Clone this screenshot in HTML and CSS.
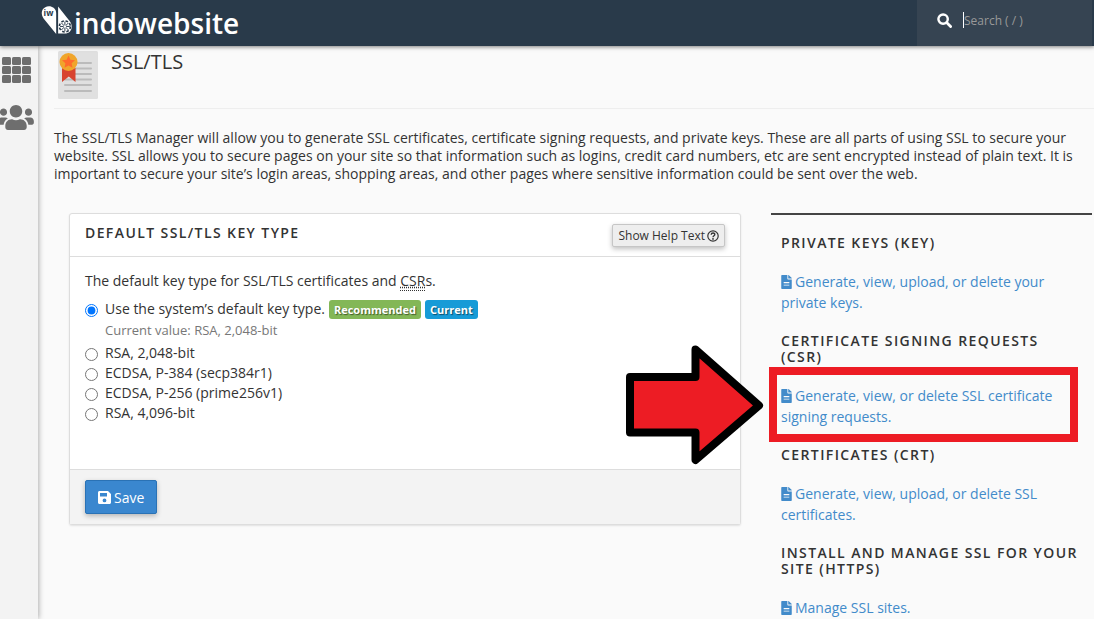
FILE: index.html
```html
<!DOCTYPE html>
<html lang="en">
<head>
    <meta charset="utf-8">
    <title>SSL/TLS</title>
    <link rel="stylesheet" href="styles.css">
</head>
<body>
    <!-- shared symbols -->
    <svg class="symbols" aria-hidden="true">
        <symbol id="icon-file" viewBox="0 0 384 512">
            <path d="M224 136V0H24C11 0 0 11 0 24v464c0 13 11 24 24 24h336c13 0 24-11 24-24V160H248c-13 0-24-11-24-24zm72 240c0 7-5 12-12 12H100c-7 0-12-5-12-12v-24h208v24zm0-88c0 7-5 12-12 12H100c-7 0-12-5-12-12v-36h196c7 0 12 5 12 12v24zM384 122v6H256V0h6c6 0 12 3 17 7l98 98c4 4 7 10 7 17z"/>
        </symbol>
    </svg>

    <header class="topbar">
        <a class="brand" href="#" aria-label="indowebsite">
            <svg class="brand-mark" viewBox="0 0 96 90" aria-hidden="true">
                <path fill="#fff" d="M47 88 8 40C-1 28 1 12 12 6c10-6 20-4 27 1 6 5 8 10 8 17z"/>
                <path fill="#fff" d="M53 3v84h20c14 0 22-9 22-22 0-8-3-13-7-18z"/>
                <text x="8" y="34" class="brand-iw">iw</text>
                <g stroke="#293a4a" fill="none">
                    <circle cx="74" cy="65" r="17" stroke-width="5" stroke-dasharray="8 5.350"/>
                    <path stroke-width="3" d="M74 50v30M59 65h30M63 54l22 22M85 54 63 76"/>
                </g>
                <circle cx="74" cy="65" r="4" fill="#fff"/>
            </svg>
            <span class="brand-name">indowebsite</span>
        </a>
        <div class="search">
            <label for="search" aria-label="Search">
                <svg viewBox="0 0 16 16" class="search-icon" aria-hidden="true">
                    <circle cx="6.5" cy="6.5" r="5" fill="none" stroke="#fff" stroke-width="2.6"/>
                    <path d="m10.5 10.5 4 4" stroke="#fff" stroke-width="3" stroke-linecap="round"/>
                </svg>
            </label>
            <input type="text" id="search" placeholder="Search ( / )">
        </div>
    </header>

    <div class="layout">
        <nav class="sidebar">
            <a href="#" aria-label="Home">
                <svg class="icon-grid" viewBox="0 0 29 26" fill="#6e6e6e" aria-hidden="true">
                    <rect x="0" y="0" width="9" height="8" rx="1.5"/>
                    <rect x="10" y="0" width="9" height="8" rx="1.5"/>
                    <rect x="20" y="0" width="9" height="8" rx="1.5"/>
                    <rect x="0" y="9" width="9" height="8" rx="1.5"/>
                    <rect x="10" y="9" width="9" height="8" rx="1.5"/>
                    <rect x="20" y="9" width="9" height="8" rx="1.5"/>
                    <rect x="0" y="18" width="9" height="8" rx="1.5"/>
                    <rect x="10" y="18" width="9" height="8" rx="1.5"/>
                    <rect x="20" y="18" width="9" height="8" rx="1.5"/>
                </svg>
            </a>
            <a href="#" aria-label="User Manager">
                <svg class="icon-users" viewBox="0 32 640 448" fill="#6e6e6e" aria-hidden="true">
                    <path d="M96 224c35.300 0 64-28.700 64-64s-28.700-64-64-64-64 28.700-64 64 28.700 64 64 64zm448 0c35.300 0 64-28.700 64-64s-28.700-64-64-64-64 28.700-64 64 28.700 64 64 64zm32 32h-64c-17.600 0-33.500 7.100-45.100 18.600 40.300 22.100 68.900 62 75.100 109.400h66c17.700 0 32-14.300 32-32v-32c0-35.300-28.700-64-64-64zm-256 0c61.900 0 112-50.100 112-112S381.900 32 320 32 208 82.100 208 144s50.100 112 112 112zm76.800 32h-8.300c-20.800 10-43.900 16-68.500 16s-47.600-6-68.500-16h-8.300C179.600 288 128 339.600 128 403.200V432c0 26.500 21.500 48 48 48h288c26.500 0 48-21.500 48-48v-28.800c0-63.600-51.600-115.200-115.200-115.200zm-223.700-13.400C161.500 263.100 145.600 256 128 256H64c-35.300 0-64 28.700-64 64v32c0 17.700 14.300 32 32 32h65.900c6.300-47.400 34.900-87.300 75.200-109.400z"/>
                </svg>
            </a>
        </nav>

        <main class="content">
            <div class="page-header">
                <svg class="page-icon" viewBox="0 0 40 48" aria-hidden="true">
                    <rect width="40" height="48" rx="1.500" fill="#e0e0e0"/>
                    <path d="M7 12h26M7 17.500h26M7 23h26M7 28.500h26M7 34h26M7 40h26" stroke="#bbb" stroke-width="2" stroke-linecap="round"/>
                    <path fill="#d8432f" d="M4 17h13.500v14l-6.700-5.500L4 31z"/>
                    <circle cx="10.500" cy="11" r="9" fill="#f0a52b"/>
                    <path fill="#ff6b2c" d="m10.500 4.500 1.900 4.200 4.600.5-3.400 3.100.9 4.500-4-2.200-4 2.200.9-4.500L4 9.200l4.600-.5z"/>
                </svg>
                <h1>SSL/TLS</h1>
            </div>

            <p class="intro">The SSL/TLS Manager will allow you to generate SSL certificates, certificate signing requests, and private keys. These are all parts of using SSL to secure your website. SSL allows you to secure pages on your site so that information such as logins, credit card numbers, etc are sent encrypted instead of plain text. It is important to secure your site’s login areas, shopping areas, and other pages where sensitive information could be sent over the web.</p>

            <div class="columns">
                <form class="panel">
                    <div class="panel-heading">
                        <h2>Default SSL/TLS Key Type</h2>
                        <button type="button" class="btn-help">Show Help Text
                            <svg viewBox="0 0 12 12" aria-hidden="true">
                                <circle cx="6" cy="6" r="5.200" fill="none" stroke="#333" stroke-width="1.200"/>
                                <path d="M4.200 4.700c.1-2.300 3.700-2.200 3.600-.1C7.800 5.800 6 5.700 6 7.200" fill="none" stroke="#333" stroke-width="1.400"/>
                                <circle cx="6" cy="8.900" r=".9" fill="#333"/>
                            </svg>
                        </button>
                    </div>
                    <div class="panel-body">
                        <p>The default key type for SSL/TLS certificates and <abbr title="Certificate Signing Request">CSR</abbr>s.</p>
                        <div class="option">
                            <input type="radio" name="keytype" id="key-system" checked>
                            <label for="key-system">Use the system’s default key type.</label>
                            <span class="tag tag-success">Recommended</span>
                            <span class="tag tag-info">Current</span>
                        </div>
                        <div class="current-value">Current value: RSA, 2,048-bit</div>
                        <div class="option">
                            <input type="radio" name="keytype" id="key-rsa2048">
                            <label for="key-rsa2048">RSA, 2,048-bit</label>
                        </div>
                        <div class="option">
                            <input type="radio" name="keytype" id="key-p384">
                            <label for="key-p384">ECDSA, P-384 (secp384r1)</label>
                        </div>
                        <div class="option">
                            <input type="radio" name="keytype" id="key-p256">
                            <label for="key-p256">ECDSA, P-256 (prime256v1)</label>
                        </div>
                        <div class="option">
                            <input type="radio" name="keytype" id="key-rsa4096">
                            <label for="key-rsa4096">RSA, 4,096-bit</label>
                        </div>
                    </div>
                    <div class="panel-footer">
                        <button type="button" class="btn-save">
                            <svg viewBox="0 0 13 13" aria-hidden="true">
                                <path fill="#fff" fill-rule="evenodd" d="M1.500 0H10l3 3v8.500c0 .8-.7 1.500-1.500 1.500h-10C.7 13 0 12.300 0 11.500v-10C0 .7.700 0 1.500 0zM2 2v3.500h7V2zm4.500 5.500a1.900 1.900 0 1 0 0 3.800 1.900 1.900 0 0 0 0-3.800z"/>
                            </svg>
                            Save
                        </button>
                    </div>
                </form>

                <aside class="actions">
                    <h2>Private Keys (KEY)</h2>
                    <p><a href="#"><svg class="icon-file"><use href="#icon-file"/></svg>Generate, view, upload, or delete your private keys.</a></p>

                    <h2>Certificate Signing Requests (CSR)</h2>
                    <p class="marked">
                        <a href="#"><svg class="icon-file"><use href="#icon-file"/></svg>Generate, view, or delete SSL certificate signing requests.</a>
                        <span class="marker-box"></span>
                        <svg class="marker-arrow" viewBox="0 0 138 120" aria-hidden="true">
                            <path d="M4 32h65.500V4.500L133 60.500 69.500 115V87.500H4z" fill="#ed1c24" stroke="#000" stroke-width="8" stroke-linejoin="round"/>
                        </svg>
                    </p>

                    <h2>Certificates (CRT)</h2>
                    <p><a href="#"><svg class="icon-file"><use href="#icon-file"/></svg>Generate, view, upload, or delete SSL certificates.</a></p>

                    <h2>Install and Manage SSL for your site (HTTPS)</h2>
                    <p><a href="#"><svg class="icon-file"><use href="#icon-file"/></svg>Manage SSL sites.</a></p>
                </aside>
            </div>
        </main>
    </div>
</body>
</html>
```

FILE: styles.css
```css
* {
    box-sizing: border-box;
}
body {
    display: flex;
    flex-direction: column;
    height: 100vh;
    margin: 0;
    overflow: hidden;
    background: #fafafa;
    color: #333;
    font-family: "Open Sans", "Noto Sans", sans-serif;
    font-size: 14px;
    line-height: 20px;
}
h1, h2, p {
    margin: 0;
}
button, input {
    font-family: inherit;
}
.symbols {
    display: none;
}

/* top bar */
.topbar {
    display: flex;
    justify-content: space-between;
    flex: none;
    height: 46px;
    padding: 0 2px 0 41px;
    background: #293a4a;
    box-shadow: 0 1px 4px rgba(0, 0, 0, 0.5);
    z-index: 2;
}
.brand {
    display: flex;
    align-items: flex-start;
    gap: 2px;
    padding-top: 5px;
    color: #fff;
    text-decoration: none;
}
.brand-mark {
    width: 31px;
    height: 30px;
}
.brand-iw {
    fill: #293a4a;
    font-size: 26px;
    font-weight: bold;
}
.brand-name {
    font-size: 28px;
    font-weight: 600;
    line-height: 36px;
}
.search {
    display: flex;
    align-items: center;
    width: 175px;
    padding: 0 20px 6px 20px;
    background: #364452;
}
.search label {
    display: flex;
}
.search-icon {
    width: 15px;
    height: 15px;
}
.search input {
    width: 100px;
    height: 16px;
    margin-left: 11px;
    padding: 0;
    border: 0;
    border-left: 1px solid #fff;
    background: transparent;
    color: #fff;
    font-size: 12px;
    outline: none;
}
.search input::placeholder {
    color: #999;
}

/* page frame */
.layout {
    display: flex;
    flex: 1;
    min-height: 0;
}
.sidebar {
    display: flex;
    flex-direction: column;
    gap: 22px;
    flex: none;
    width: 38px;
    padding-top: 11px;
    background: #f3f3f3;
    box-shadow: 0 0 6px rgba(0, 0, 0, 0.4);
}
.sidebar a {
    display: flex;
}
.icon-grid {
    width: 29px;
    height: 26px;
    margin-left: 2px;
}
.icon-users {
    width: 36px;
    height: 25px;
    margin-left: -2px;
}
.content {
    flex: 1;
    min-width: 0;
    padding: 0 0 0 16px;
}
.page-header {
    display: flex;
    gap: 13px;
    padding: 5px 4px 9px;
    border-bottom: 1px solid #eee;
}
.page-icon {
    width: 40px;
    height: 48px;
}
.page-header h1 {
    font-size: 20px;
    font-weight: normal;
    line-height: 22px;
}
.intro {
    padding: 20px 15px 0 0;
    line-height: 18px;
}
.columns {
    display: grid;
    grid-template-columns: minmax(0, 1fr) 321px;
    gap: 30px;
    align-items: start;
    padding: 30px 2px 0 15px;
}
h2 {
    font-size: 14px;
    font-weight: 600;
    line-height: 16px;
    letter-spacing: 0.1em;
    text-transform: uppercase;
}

/* key type panel */
.panel {
    border: 1px solid #ddd;
    border-radius: 3px;
    background: #fff;
    box-shadow: 0 1px 2px rgba(0, 0, 0, 0.1);
}
.panel-heading {
    display: flex;
    justify-content: space-between;
    padding: 10px 15px 9px;
    border-bottom: 1px solid #ddd;
}
.panel-heading h2 {
    line-height: 18px;
}
.btn-help {
    display: flex;
    align-items: center;
    gap: 2px;
    height: 23px;
    padding: 0 5px;
    border: 1px solid #c6c6c6;
    border-radius: 2px;
    background: #eee;
    box-shadow: 0 2px 5px rgba(0, 0, 0, 0.25);
    color: #333;
    font-size: 12px;
}
.btn-help svg {
    width: 12px;
    height: 12px;
}
.panel-body {
    padding: 14px 15px 46px;
}
.panel-body p {
    margin-bottom: 8px;
}
.panel-body abbr {
    border-bottom: 1px dotted #333;
    text-decoration: underline dotted;
}
.option {
    display: flex;
    align-items: center;
}
.option input {
    width: 13px;
    height: 13px;
    margin: 3px 7px 0 0;
}
.current-value {
    padding: 1px 0 3px 20px;
    color: #777;
    font-size: 13px;
}
.tag {
    margin-left: 4px;
    padding: 0 5px;
    border-radius: 3px;
    color: #fff;
    font-size: 11px;
    font-weight: bold;
    line-height: 19px;
    text-shadow: 1px 1px 1px rgba(0, 0, 0, 0.5);
}
.tag-success {
    background: #83b757;
}
.tag-info {
    background: #179bd7;
}
.panel-footer {
    padding: 10px 15px;
    border-top: 1px solid #ddd;
    background: #f3f3f3;
}
.btn-save {
    display: flex;
    align-items: center;
    gap: 3px;
    height: 34px;
    padding: 0 12px;
    border: 1px solid #2a72b5;
    border-radius: 2px;
    background: #3a87cf;
    box-shadow: 0 2px 5px rgba(0, 0, 0, 0.25);
    color: #fff;
    font-size: 14px;
}
.btn-save svg {
    width: 13px;
    height: 13px;
}

/* right column */
.actions {
    padding: 20px 10px 0;
    border-top: 2px solid #444;
}
.actions p {
    margin: 20px 0;
    line-height: 21px;
}
.actions a {
    color: #428bca;
    text-decoration: none;
}
.icon-file {
    width: 11px;
    height: 14px;
    margin-right: 3px;
    fill: #428bca;
    vertical-align: -2px;
}
.marked {
    position: relative;
}
.marker-box {
    position: absolute;
    top: -18px;
    right: 4px;
    bottom: -15px;
    left: -12px;
    border: 8px solid #ed1c24;
    pointer-events: none;
}
.marker-arrow {
    position: absolute;
    top: -40px;
    left: -155px;
    width: 138px;
    height: 120px;
    pointer-events: none;
}
```
